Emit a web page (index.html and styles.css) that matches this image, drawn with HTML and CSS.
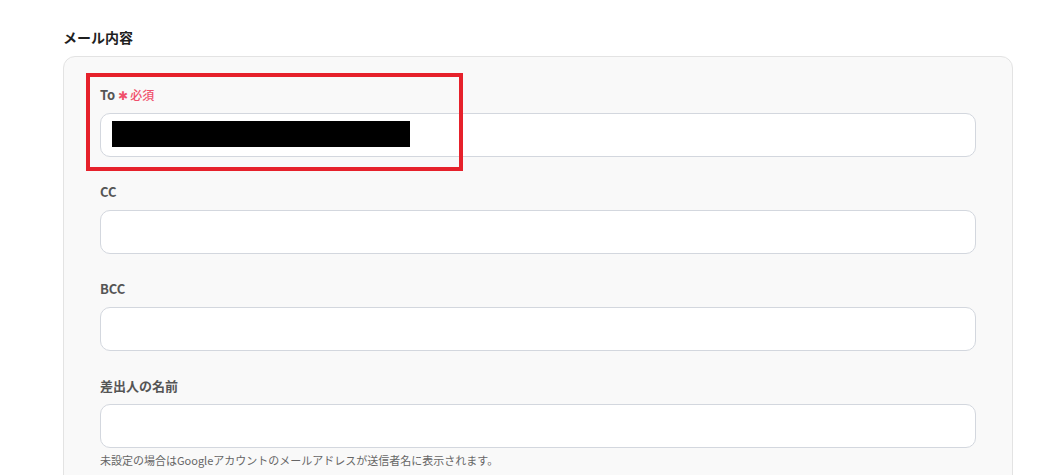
FILE: index.html
```html
<!DOCTYPE html>
<html lang="ja">
<head>
  <meta charset="utf-8" />
  <title>メール内容</title>
  <link rel="stylesheet" href="styles.css">
</head>
<body>
  <div class="wrap">
    <p class="section-title">メール内容</p>

    <div class="panel">
      <div class="highlight"></div>

      <div class="field">
        <label class="field-label">To <span class="required"><span class="star">✱</span>必須</span></label>
        <div class="field-input"><span class="redact"></span></div>
      </div>

      <div class="field">
        <label class="field-label">CC</label>
        <div class="field-input"></div>
      </div>

      <div class="field">
        <label class="field-label">BCC</label>
        <div class="field-input"></div>
      </div>

      <div class="field">
        <label class="field-label">差出人の名前</label>
        <div class="field-input"></div>
        <p class="field-help">未設定の場合はGoogleアカウントのメールアドレスが送信者名に表示されます。</p>
      </div>
    </div>
  </div>
</body>
</html>
```

FILE: styles.css
```css
*, *::before, *::after {
  box-sizing: border-box;
}

body {
  margin: 0;
  background: white;
  font-family: "Noto Sans CJK JP", "Noto Sans", sans-serif;
  color: #222;
  overflow: hidden;
}

.wrap {
  padding: 27px 50px 0 63px;
}

.section-title {
  margin: 0 0 9px;
  font-size: 14px;
  line-height: 20px;
  font-weight: 700;
  color: #1f1f1f;
}

.panel {
  position: relative;
  background: #f9f9f9;
  border: 1px solid #e3e3e3;
  border-radius: 12px;
  padding: 28px 36px 40px;
  display: flex;
  flex-direction: column;
  gap: 25px;
}

.highlight {
  position: absolute;
  left: 22px;
  top: 16px;
  width: 377px;
  height: 98px;
  border: 4px solid #e6212b;
  pointer-events: none;
}

.field-label {
  display: block;
  margin-bottom: 8px;
  font-size: 13px;
  line-height: 20px;
  font-weight: 700;
  color: #555;
}

.required {
  color: #f0506b;
  font-weight: 500;
  font-size: 12px;
}

.star {
  margin-right: 2px;
}

.field-input {
  height: 44px;
  background: white;
  border: 1px solid #d3d7de;
  border-radius: 10px;
  padding: 7px 11px;
}

.redact {
  display: block;
  width: 298px;
  height: 26px;
  background: black;
}

.field-help {
  margin: 4px 0 0;
  font-size: 11px;
  line-height: 16px;
  color: #666;
}
```
